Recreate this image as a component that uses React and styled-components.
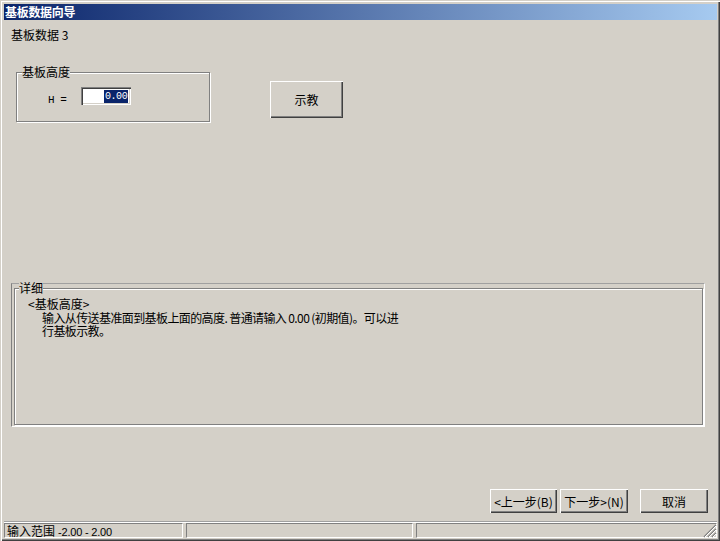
import styled, { createGlobalStyle } from "styled-components";

const GlobalStyle = createGlobalStyle`
  html, body {
    margin: 0;
    padding: 0;
    background: #d4d0c8;
  }
  * {
    box-sizing: border-box;
  }
`;

const FONT = `"Noto Sans CJK SC", "Liberation Sans", sans-serif`;

const Window = styled.div`
  width: 720px;
  height: 541px;
  background: #d4d0c8;
  font-family: ${FONT};
  font-size: 12px;
  color: #000;
  display: flex;
  flex-direction: column;
  padding: 4px 3px 3px 4px;
  box-shadow: inset 1px 1px 0 #d4d0c8, inset 2px 2px 0 #fff,
    inset -1px -1px 0 #404040, inset -2px -2px 0 #808080;
`;

const TitleBar = styled.div`
  height: 16px;
  flex: none;
  background: linear-gradient(to right, #0a246a, #a6caf0);
  color: #fff;
  font-weight: bold;
  line-height: 16px;
  padding-left: 1px;
  letter-spacing: -0.3px;
`;

const Body = styled.div`
  flex: 1;
  display: flex;
  flex-direction: column;
  min-height: 0;
`;

const Subtitle = styled.div`
  margin: 8px 0 0 7px;
  height: 13px;
  line-height: 13px;
`;

const TopRow = styled.div`
  display: flex;
  align-items: flex-start;
  margin-top: 25px;
  padding-left: 12px;
`;

const Group = styled.fieldset`
  margin: 0;
  padding: 0;
  width: ${(p) => p.$w}px;
  height: ${(p) => p.$h}px;
  border: 1px solid #808080;
  box-shadow: inset 1px 1px 0 #fff, 1px 1px 0 #fff;
  display: flex;
  align-items: center;
`;

const Legend = styled.legend`
  padding: 0;
  margin-left: 5px;
  line-height: 12px;
  background: #d4d0c8;
`;

const Label = styled.span`
  margin-left: 31px;
  margin-right: 15px;
  font-family: "Liberation Mono", monospace;
  font-size: 11px;
  letter-spacing: -0.5px;
`;

const Input = styled.div`
  width: 50px;
  height: 18px;
  background: #fff;
  box-shadow: inset 1px 1px 0 #808080, inset 2px 2px 0 #404040,
    inset -1px -1px 0 #fff, inset -2px -2px 0 #d4d0c8;
  display: flex;
  justify-content: flex-end;
  align-items: center;
  padding: 0 3px;
  margin-top: -7px;
`;

const Selected = styled.span`
  background: #0a246a;
  color: #fff;
  font-family: "Liberation Mono", monospace;
  font-size: 10px;
  line-height: 13px;
  padding: 0 1px;
  letter-spacing: -0.4px;
`;

const Button = styled.button`
  width: ${(p) => p.$w}px;
  height: ${(p) => p.$h}px;
  margin: 0;
  padding: 0;
  border: none;
  background: #d4d0c8;
  font-family: ${FONT};
  font-size: 12px;
  color: #000;
  box-shadow: inset 1px 1px 0 #fff, inset -1px -1px 0 #404040,
    inset -2px -2px 0 #808080;
  display: flex;
  align-items: center;
  justify-content: center;
  flex: none;
`;

const TeachButton = styled(Button)`
  margin-left: 60px;
  margin-top: 15px;
`;

const Spacer = styled.div`
  flex: 1;
`;

const DetailOuter = styled.div`
  margin: 0 12px 0 7px;
  height: 144px;
  border-top: 1px solid #a0a0a0;
  border-left: 1px solid #808080;
  border-right: 1px solid #fff;
  border-bottom: 1px solid #fff;
  display: flex;
  padding: 4px 1px 1px 2px;
`;

const DetailGroup = styled(Group)`
  flex: 1;
  height: auto;
  display: block;
  margin-top: -6px;
  padding: 2px 0 0 13px;
`;

const DetailLegend = styled(Legend)`
  margin-left: -9px;
`;

const Heading = styled.div`
  line-height: 15px;
`;

const Paragraph = styled.p`
  margin: 0;
  line-height: 13px;
  padding-left: 14px;
  letter-spacing: -0.6px;
  white-space: nowrap;
`;

const ButtonRow = styled.div`
  display: flex;
  justify-content: flex-end;
  padding-right: 9px;
  margin-top: 62px;
  gap: 3px;
`;

const CancelButton = styled(Button)`
  margin-left: 9px;
`;

const Separator = styled.div`
  margin-top: 8px;
  height: 2px;
  border-top: 1px solid #a0a0a0;
  border-bottom: 1px solid #fff;
`;

const StatusBar = styled.div`
  display: flex;
  gap: 3px;
  height: 15px;
  position: relative;
`;

const Panel = styled.div`
  width: ${(p) => (p.$w ? `${p.$w}px` : "auto")};
  flex: ${(p) => (p.$w ? "none" : 1)};
  height: 15px;
  border-top: 1px solid #808080;
  border-left: 1px solid #808080;
  border-right: 1px solid #fff;
  border-bottom: 1px solid #fff;
  padding-left: 2px;
  line-height: 13px;
  white-space: nowrap;
`;

const Range = styled.span`
  font-family: "Liberation Sans", sans-serif;
  font-size: 11px;
  margin-left: 3px;
  letter-spacing: -0.2px;
`;

const Grip = styled.svg`
  position: absolute;
  right: 0;
  bottom: 0;
`;

export default function App() {
  return (
    <>
      <GlobalStyle />
      <Window>
        <TitleBar>基板数据向导</TitleBar>
        <Body>
          <Subtitle>基板数据 3</Subtitle>
          <TopRow>
            <Group $w={194} $h={56}>
              <Legend>基板高度</Legend>
              <Label>H =</Label>
              <Input>
                <Selected>0.00</Selected>
              </Input>
            </Group>
            <TeachButton $w={73} $h={37}>
              示教
            </TeachButton>
          </TopRow>
          <Spacer />
          <DetailOuter>
            <DetailGroup>
              <DetailLegend>详细</DetailLegend>
              <Heading>&lt;基板高度&gt;</Heading>
              <Paragraph>
                输入从传送基准面到基板上面的高度. 普通请输入 0.00 (初期值)。可以进
                <br />
                行基板示教。
              </Paragraph>
            </DetailGroup>
          </DetailOuter>
          <ButtonRow>
            <Button $w={67} $h={24}>
              &lt;上一步(B)
            </Button>
            <Button $w={68} $h={24}>
              下一步&gt;(N)
            </Button>
            <CancelButton $w={68} $h={24}>
              取消
            </CancelButton>
          </ButtonRow>
          <Separator />
          <StatusBar>
            <Panel $w={179}>
              输入范围<Range>-2.00 - 2.00</Range>
            </Panel>
            <Panel $w={227} />
            <Panel />
            <Grip width="14" height="14" viewBox="0 0 14 14">
              <path d="M13 1L1 13M13 5L5 13M13 9L9 13" stroke="#808080" strokeWidth="1.5" />
              <path d="M13 2L2 13M13 6L6 13M13 10L10 13" stroke="#fff" strokeWidth="1" />
            </Grip>
          </StatusBar>
        </Body>
      </Window>
    </>
  );
}
